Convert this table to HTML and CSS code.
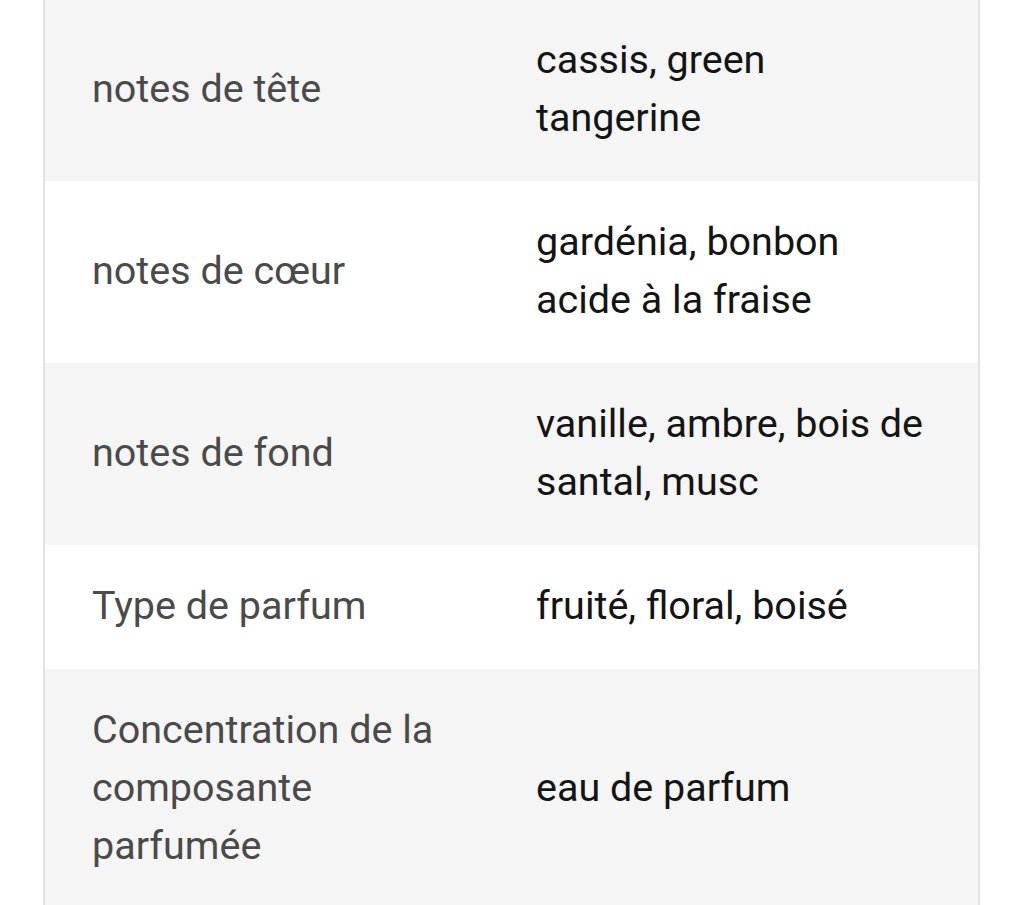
FILE: index.html
```html
<!DOCTYPE html>
<html lang="fr">
<head>
<meta charset="utf-8">
<link rel="stylesheet" href="styles.css">
</head>
<body>
<div class="card">
  <div class="row alt">
    <div class="label">notes de tête</div>
    <div class="value">cassis, green<br>tangerine</div>
  </div>
  <div class="row">
    <div class="label">notes de cœur</div>
    <div class="value">gardénia, bonbon<br>acide à la fraise</div>
  </div>
  <div class="row alt">
    <div class="label">notes de fond</div>
    <div class="value">vanille, ambre, bois de<br>santal, musc</div>
  </div>
  <div class="row">
    <div class="label">Type de parfum</div>
    <div class="value">fruité, floral, boisé</div>
  </div>
  <div class="row alt">
    <div class="label">Concentration de la<br>composante<br>parfumée</div>
    <div class="value">eau de parfum</div>
  </div>
</div>
</body>
</html>
```
FILE: styles.css
```css
html, body {
  margin: 0;
  padding: 0;
  background: #ffffff;
}
body {
  font-family: Roboto, "Liberation Sans", sans-serif;
  font-size: 39.5px;
  line-height: 58px;
  overflow: hidden;
}
.card {
  margin-top: -1px;
  margin-left: 43px;
  width: 933px;
  border-left: 2px solid #e2e2e2;
  border-right: 2px solid #e2e2e2;
  background: #ffffff;
}
.row {
  display: grid;
  grid-template-columns: 491px 1fr;
  align-items: center;
  padding: 32px 0 34px;
  background: #ffffff;
}
.row.alt {
  background: #f5f5f5;
}
.label {
  padding-left: 47px;
  color: #4a4a4a;
}
.value {
  color: #141414;
}
```
